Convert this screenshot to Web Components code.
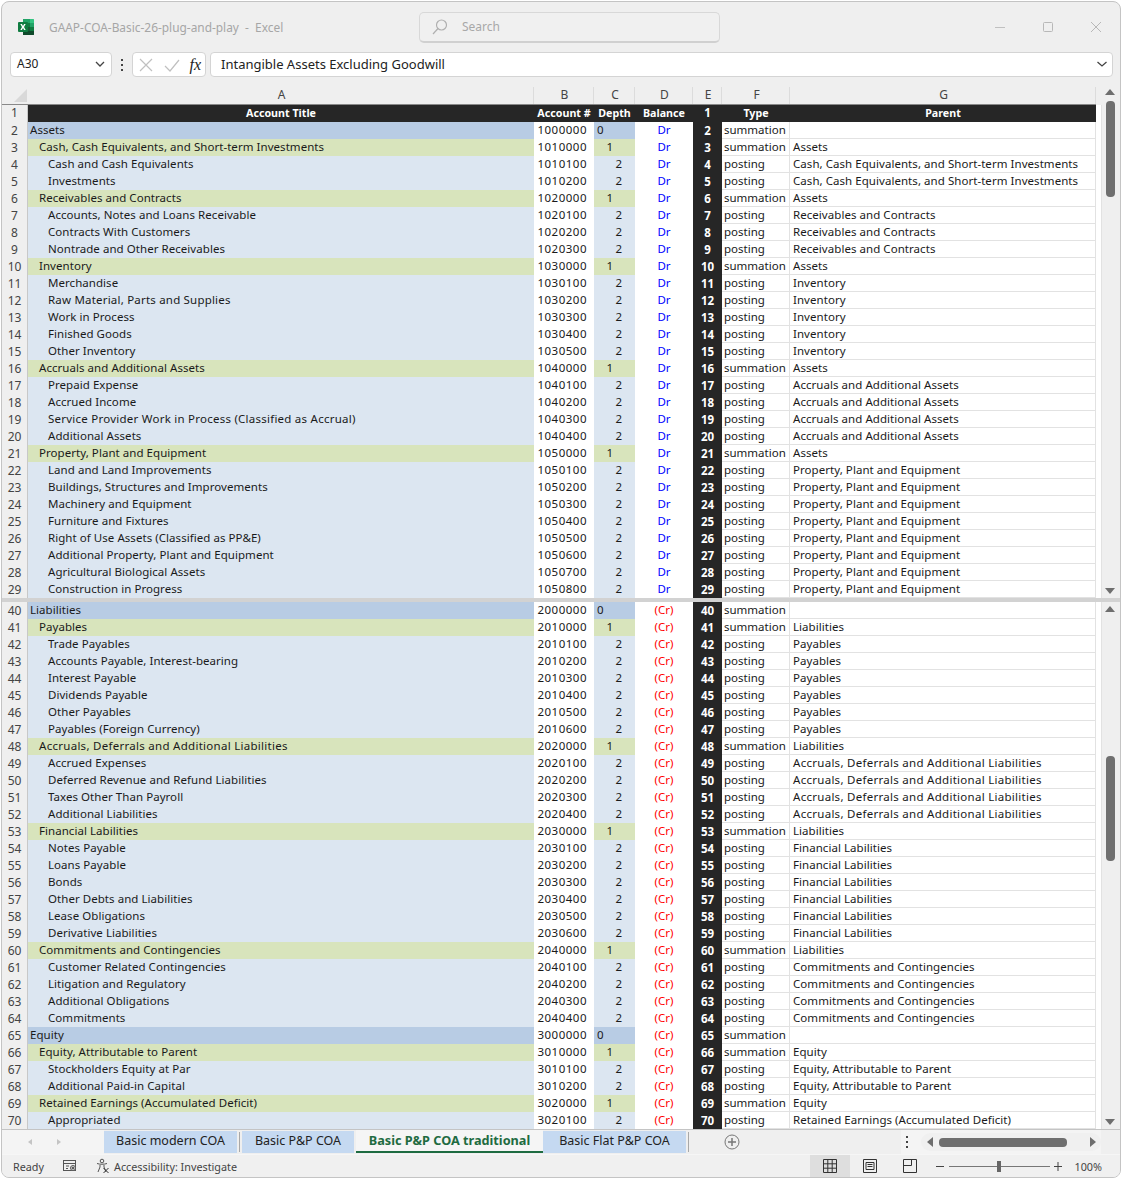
<!DOCTYPE html>
<html>
<head>
<meta charset="utf-8">
<title>Excel</title>
<style>
  html, body { margin: 0; padding: 0; background: #fff; }
  body { font-family: "Noto Sans", "Liberation Sans", sans-serif; }
</style>
</head>
<body>
<xl-window>
  <xl-titlebar slot="title" doc="GAAP-COA-Basic-26-plug-and-play  -  Excel"></xl-titlebar>
  <xl-formulabar slot="formula" cell="A30" value="Intangible Assets Excluding Goodwill"></xl-formulabar>
  <xl-heading slot="heading"></xl-heading>
  <xl-pane slot="top" from="1" to="29" up-top="-16" thumb-top="-4" thumb-height="96"></xl-pane>
  <xl-pane slot="bottom" from="40" to="70" up-top="4" thumb-top="154" thumb-height="105"></xl-pane>
  <xl-tabs slot="tabs"></xl-tabs>
  <xl-status slot="status"></xl-status>
</xl-window>

<script>
// column widths shared by heading and panes
const COLS = '506px 60px 41px 58px 29px 68px 306px';

const SHEET = [
  null, null,
  [0,'Assets',1000000],[1,'Cash, Cash Equivalents, and Short-term Investments',1010000],[2,'Cash and Cash Equivalents',1010100],[2,'Investments',1010200],
  [1,'Receivables and Contracts',1020000],[2,'Accounts, Notes and Loans Receivable',1020100],[2,'Contracts With Customers',1020200],[2,'Nontrade and Other Receivables',1020300],
  [1,'Inventory',1030000],[2,'Merchandise',1030100],[2,'Raw Material, Parts and Supplies',1030200],[2,'Work in Process',1030300],[2,'Finished Goods',1030400],[2,'Other Inventory',1030500],
  [1,'Accruals and Additional Assets',1040000],[2,'Prepaid Expense',1040100],[2,'Accrued Income',1040200],[2,'Service Provider Work in Process (Classified as Accrual)',1040300],[2,'Additional Assets',1040400],
  [1,'Property, Plant and Equipment',1050000],[2,'Land and Land Improvements',1050100],[2,'Buildings, Structures and Improvements',1050200],[2,'Machinery and Equipment',1050300],[2,'Furniture and Fixtures',1050400],[2,'Right of Use Assets (Classified as PP&E)',1050500],[2,'Additional Property, Plant and Equipment',1050600],[2,'Agricultural Biological Assets',1050700],[2,'Construction in Progress',1050800]
];
SHEET[40] = [0,'Liabilities',2000000];
[
  [1,'Payables',2010000],[2,'Trade Payables',2010100],[2,'Accounts Payable, Interest-bearing',2010200],[2,'Interest Payable',2010300],[2,'Dividends Payable',2010400],[2,'Other Payables',2010500],[2,'Payables (Foreign Currency)',2010600],
  [1,'Accruals, Deferrals and Additional Liabilities',2020000],[2,'Accrued Expenses',2020100],[2,'Deferred Revenue and Refund Liabilities',2020200],[2,'Taxes Other Than Payroll',2020300],[2,'Additional Liabilities',2020400],
  [1,'Financial Labilities',2030000],[2,'Notes Payable',2030100],[2,'Loans Payable',2030200],[2,'Bonds',2030300],[2,'Other Debts and Liabilities',2030400],[2,'Lease Obligations',2030500],[2,'Derivative Liabilities',2030600],
  [1,'Commitments and Contingencies',2040000],[2,'Customer Related Contingencies',2040100],[2,'Litigation and Regulatory',2040200],[2,'Additional Obligations',2040300],[2,'Commitments',2040400],
  [0,'Equity',3000000],[1,'Equity, Attributable to Parent',3010000],[2,'Stockholders Equity at Par',3010100],[2,'Additional Paid-in Capital',3010200],
  [1,'Retained Earnings (Accumulated Deficit)',3020000],[2,'Appropriated',3020100]
].forEach((r, i) => { SHEET[41 + i] = r; });

// a few long strings run wider in the reference
const WIDE = {
  'Accruals, Deferrals and Additional Liabilities': .28,
  'Service Provider Work in Process (Classified as Accrual)': .24,
  'Raw Material, Parts and Supplies': .2
};
const spacing = t => WIDE[t] ? `letter-spacing:${WIDE[t]}px` : '';

// parent names, worked out from the depth column
function parentOf(n) {
  const d = SHEET[n][0];
  if (d === 0) return '';
  for (let i = n - 1; i > 1; i--) {
    if (SHEET[i] && SHEET[i][0] === d - 1) return SHEET[i][1];
  }
  return '';
}

function shadow(el, html) {
  el.attachShadow({mode: 'open'}).innerHTML = html;
}

class XlWindow extends HTMLElement {
  constructor() {
    super();
    shadow(this, `
      <style>
        :host { display: block; width: 1122px; height: 1179px; box-sizing: border-box; padding: 1px; background: #fff; }
        .frame { width: 1120px; height: 1177px; box-sizing: border-box; border: 1px solid #c4c4c4; border-radius: 8px; background: #efefef; overflow: hidden; display: flex; flex-direction: column; }
        .gap { height: 4px; background: #d2d2d2; flex: none; }
      </style>
      <div class="frame">
        <slot name="title"></slot>
        <slot name="formula"></slot>
        <slot name="heading"></slot>
        <slot name="top"></slot>
        <div class="gap"></div>
        <slot name="bottom"></slot>
        <slot name="tabs"></slot>
        <slot name="status"></slot>
      </div>`);
  }
}

class XlTitlebar extends HTMLElement {
  connectedCallback() {
    shadow(this, `
      <style>
        :host { display: flex; align-items: center; height: 50px; flex: none; box-sizing: border-box; padding-left: 15px; }
        .logo { width: 18px; height: 18px; flex: none; }
        .doc { margin-left: 14px; width: 370px; flex: none; font-size: 11.900px; color: #a6a6a6; white-space: pre; }
        .search { width: 301px; height: 31px; flex: none; box-sizing: border-box; border: 1px solid #d8d8d8; border-bottom: 2px solid #d0d0d0; border-radius: 5px; background: #f0f0f0; display: flex; align-items: center; padding-left: 11px; font-size: 12px; color: #a8a8a8; }
        .search svg { margin-right: 13px; }
        .ctl { margin-left: auto; display: flex; padding-right: 17px; align-items: center; }
        .ctl svg + svg { margin-left: 34px; }
        .ctl svg + svg + svg { margin-left: 34px; }
        svg { display: block; }
      </style>
      <svg class="logo" viewBox="0 0 18 18">
        <path d="M6 1h7v4H6z" fill="#21a366"/><path d="M13 1h3.400c.4 0 .6.300.6.600V5h-4z" fill="#33c481"/>
        <path d="M6 5h7v4H6z" fill="#107c41"/><path d="M13 5h4v4h-4z" fill="#21a366"/>
        <path d="M6 9h7v4H6z" fill="#185c37"/><path d="M13 9h4v4h-4z" fill="#107c41"/>
        <path d="M6 13h11v3.400c0 .4-.3.600-.6.600H6.600c-.4 0-.6-.3-.6-.6z" fill="#0f4a2b"/>
        <rect x="1" y="4" width="10" height="10" rx="1" fill="#107c41"/>
        <path d="M3.300 6h1.600l1.100 2 1.100-2h1.600L7 9l1.700 3H7.100L6 10 4.900 12H3.300L5 9z" fill="#fff"/>
      </svg>
      <span class="doc">${this.getAttribute('doc')}</span>
      <div class="search">
        <svg width="18" height="18" viewBox="0 0 18 18" fill="none" stroke="#b0b0b0" stroke-width="1.200"><circle cx="10.500" cy="7" r="5"/><path d="M7 10.500 2 16"/></svg>
        <span>Search</span>
      </div>
      <div class="ctl">
        <svg width="14" height="14" viewBox="0 0 14 14" stroke="#c0c0c0" fill="none"><path d="M2 7.500h10"/></svg>
        <svg width="14" height="14" viewBox="0 0 14 14" stroke="#b8b8b8" fill="none"><rect x="2.500" y="2.500" width="9" height="9" rx="1"/></svg>
        <svg width="14" height="14" viewBox="0 0 14 14" stroke="#b8b8b8" fill="none"><path d="M2 2l10 10M12 2 2 12"/></svg>
      </div>`);
  }
}

class XlFormulabar extends HTMLElement {
  connectedCallback() {
    shadow(this, `
      <style>
        :host { display: flex; height: 25px; flex: none; box-sizing: border-box; padding-left: 8px; padding-right: 7px; color: #222; font-size: 13px; margin-bottom: 10px; }
        .box { background: #fff; border: 1px solid #d4d4d4; border-radius: 4px; box-sizing: border-box; display: flex; align-items: center; }
        .name { width: 102px; padding-left: 6px; justify-content: space-between; padding-right: 5px; font-size: 12px; padding-bottom: 2px; }
        .dots { width: 20px; display: flex; align-items: center; justify-content: center; }
        .fx { width: 74px; justify-content: space-between; padding: 0 4px 0 5px; color: #222; font: italic 16px "Liberation Serif", serif; }
        .val { flex: 1; margin-left: 4px; padding-left: 10px; padding-right: 4px; padding-bottom: 2px; justify-content: space-between; }
        svg { display: block; }
      </style>
      <div class="box name"><span>${this.getAttribute('cell')}</span>
        <svg width="12" height="12" viewBox="0 0 12 12" fill="none" stroke="#444" stroke-width="1.300"><path d="M2 4l4 4 4-4"/></svg></div>
      <div class="dots"><svg width="4" height="14" viewBox="0 0 4 14" fill="#444"><rect x="1" y="1" width="2" height="2"/><rect x="1" y="6" width="2" height="2"/><rect x="1" y="11" width="2" height="2"/></svg></div>
      <div class="box fx">
        <svg width="16" height="16" viewBox="0 0 16 16" fill="none" stroke="#c0c0c0" stroke-width="1.200"><path d="M2 2l12 12M14 2 2 14"/></svg>
        <svg width="18" height="16" viewBox="0 0 18 16" fill="none" stroke="#c0c0c0" stroke-width="1.200"><path d="M2 9l5 5L16 3"/></svg>
        <span>fx</span>
      </div>
      <div class="box val"><span>${this.getAttribute('value')}</span>
        <svg width="12" height="12" viewBox="0 0 12 12" fill="none" stroke="#444" stroke-width="1.300"><path d="M1.500 4l4.500 4 4.500-4"/></svg></div>`);
  }
}

class XlHeading extends HTMLElement {
  connectedCallback() {
    const letters = 'ABCDEFG'.split('').map(c => `<div class="l">${c}</div>`).join('');
    shadow(this, `
      <style>
        :host { display: flex; height: 18px; flex: none; font-size: 12px; color: #444; }
        .corner { width: 26px; flex: none; box-sizing: border-box; position: relative; border-bottom: 1px solid #888; }
        .corner i { position: absolute; right: 1px; bottom: 2px; width: 0; height: 0; border-left: 13px solid transparent; border-bottom: 13px solid #d9d9d9; }
        .cols { display: grid; grid-template-columns: ${COLS}; flex: none; border-bottom: 1px solid #888; box-sizing: border-box; }
        .l { text-align: center; line-height: 16px; padding-left: 2px; border-right: 1px solid #dcdcdc; }
      </style>
      <div class="corner"><i></i></div><div class="cols">${letters}</div>`);
  }
}

class XlPane extends HTMLElement {
  connectedCallback() {
    const from = +this.getAttribute('from'), to = +this.getAttribute('to');
    let heads = '', cells = '';
    for (let n = from; n <= to; n++) {
      heads += `<div class="rh${n === 1 ? ' first' : ''}">${n}</div>`;
      if (n === 1) {
        cells += ['Account Title','Account #','Depth','Balance','1','Type','Parent']
          .map((t, i) => `<div class="c hd${i === 4 ? ' e' : ''}">${t}</div>`).join('');
        continue;
      }
      const [d, title, acct] = SHEET[n];
      const dr = acct < 2000000;
      const parent = parentOf(n);
      cells += `<div class="c a d${d}" style="padding-left:${2 + d * 9}px;${spacing(title)}">${title}</div>`
        + `<div class="c b">${acct}</div>`
        + `<div class="c dep d${d} p${d}">${d}</div>`
        + `<div class="c bal ${dr ? 'dr' : 'cr'}">${dr ? 'Dr' : '(Cr)'}</div>`
        + `<div class="c e">${n}</div>`
        + `<div class="c f">${d < 2 ? 'summation' : 'posting'}</div>`
        + `<div class="c g" style="${spacing(parent)}">${parent}</div>`;
    }
    const up = this.getAttribute('up-top'), top = this.getAttribute('thumb-top'), h = this.getAttribute('thumb-height');
    shadow(this, `
      <style>
        :host { display: flex; flex: none; font-size: 11.500px; color: #1a1a1a; background: #fff; }
        .rhs { width: 26px; flex: none; background: #efefef; }
        .rh { height: 17px; line-height: 17px; text-align: center; font-size: 12px; color: #444; box-sizing: border-box; border-right: 1px solid #c8c8c8; }
        .first { line-height: 16px; }
        .grid { display: grid; grid-template-columns: ${COLS}; grid-auto-rows: 17px; flex: none; }
        .c { white-space: pre; overflow: hidden; line-height: 16px; box-sizing: border-box; padding: 0 2px; border-bottom: 1px solid #e2e2e2; border-right: 1px solid #e2e2e2; }
        .a, .g { letter-spacing: .05px; }
        .g { padding-left: 3px; }
        .hd { background: #262626; color: #fff; font-weight: 700; font-size: 10.700px; text-align: center; border: 0; line-height: 16px; padding: 0; }
        .d0 { background: #b8cce4; border-color: #b8cce4; }
        .d1 { background: #d8e4bc; border-color: #d8e4bc; }
        .d2 { background: #dce6f1; border-color: #dce6f1; }
        .b { text-align: right; padding-right: 6px; letter-spacing: .5px; border-color: #fff; }
        .dep { text-align: right; }
        .p0 { text-align: left; padding-left: 3px; }
        .p1 { padding-right: 21px; }
        .p2 { padding-right: 12px; }
        .bal { text-align: center; padding-left: 3px; border-color: #fff; }
        .dr { color: #0000ff; }
        .cr { color: #ff0000; }
        .e { background: #262626; color: #fff; font-weight: 700; text-align: center; border: 0; line-height: 17px; padding: 0; }
        .hd.e { font-size: 11.500px; line-height: 16px; }
        .bar { flex: 1; min-width: 0; position: relative; background: #fff; display: flex; }
        .spare { width: 5px; flex: none; background: #fff; border-right: 1px solid #e2e2e2; }
        .sb { flex: 1; background: #efefef; position: relative; }
        .up, .dn { position: absolute; left: 3px; width: 0; height: 0; border-left: 5px solid transparent; border-right: 5px solid transparent; }
        .up { border-bottom: 6px solid #6e6e6e; }
        .dn { bottom: 4px; border-top: 6px solid #6e6e6e; }
        .th { position: absolute; left: 4px; width: 9px; border-radius: 4px; background: #6f6f6f; }
      </style>
      <div class="rhs">${heads}</div>
      <div class="grid">${cells}</div>
      <div class="bar"><div class="spare"></div>
        <div class="sb"><i class="up" style="top:${up}px"></i><i class="th" style="top:${top}px;height:${h}px"></i><i class="dn"></i></div>
      </div>`);
  }
}

class XlTabs extends HTMLElement {
  connectedCallback() {
    shadow(this, `
      <style>
        :host { display: flex; flex: none; height: 25px; box-sizing: border-box; border-top: 1px solid #c4c4c4; background: #efefef; font-size: 12.500px; color: #222; align-items: flex-start; }
        .nav { width: 102px; flex: none; height: 24px; display: flex; align-items: center; gap: 25px; padding-left: 26px; box-sizing: border-box; background: #f4f4f4; }
        .nav i { width: 0; height: 0; border-top: 3px solid transparent; border-bottom: 3px solid transparent; }
        .nav .p { border-right: 4px solid #c4c4c4; }
        .nav .n { border-left: 4px solid #c4c4c4; }
        .tab { height: 22px; margin-top: 1px; padding-bottom: 3px; background: #c5d9f1; display: flex; align-items: center; justify-content: center; box-sizing: border-box; flex: none; }
        .sep { width: 1px; height: 20px; margin: 2px 2px 0; background: #a8a8a8; flex: none; }
        .on { background: #f5f5f5; color: #1e6b41; font-weight: 700; font-size: 12.700px; border-bottom: 2px solid #1e6b41; margin-top: 0; height: 23px; padding-bottom: 2px; }
        .add { width: 30px; height: 24px; flex: none; margin-left: 26px; display: flex; align-items: center; justify-content: center; }
        .rest { margin-left: auto; width: 200px; height: 24px; display: flex; align-items: center; background: #f4f4f4; flex: none; margin-right: 19px; }
        .dots { margin-left: 4px; margin-right: 12px; flex: none; }
        .track { width: 180px; box-sizing: border-box; height: 18px; background: #f0f0f0; border-radius: 9px; display: flex; align-items: center; padding: 0 5px 0 6px; gap: 6px; }
        .l { width: 0; height: 0; border-top: 5px solid transparent; border-bottom: 5px solid transparent; border-right: 6px solid #6e6e6e; }
        .r { width: 0; height: 0; border-top: 5px solid transparent; border-bottom: 5px solid transparent; border-left: 6px solid #6e6e6e; margin-left: 17px; }
        .t { width: 128px; height: 9px; border-radius: 4px; background: #6f6f6f; }
        svg { display: block; }
      </style>
      <div class="nav"><i class="p"></i><i class="n"></i></div>
      <div class="tab" style="width:133px">Basic modern COA</div><div class="sep"></div>
      <div class="tab" style="width:112px">Basic P&amp;P COA</div><div style="width:2px;flex:none"></div>
      <div class="tab on" style="width:187px">Basic P&amp;P COA traditional</div>
      <div class="tab" style="width:143px">Basic Flat P&amp;P COA</div><div class="sep"></div>
      <div class="add"><svg width="16" height="16" viewBox="0 0 16 16" fill="none" stroke="#777"><circle cx="8" cy="8" r="7"/><path d="M8 4v8M4 8h8" stroke-width="1.500"/></svg></div>
      <div class="rest">
        <svg class="dots" width="4" height="14" viewBox="0 0 4 14" fill="#444"><rect x="1" y="1" width="2" height="2"/><rect x="1" y="6" width="2" height="2"/><rect x="1" y="11" width="2" height="2"/></svg>
        <div class="track"><i class="l"></i><i class="t"></i><i class="r"></i></div>
      </div>`);
  }
}

class XlStatus extends HTMLElement {
  connectedCallback() {
    shadow(this, `
      <style>
        :host { display: flex; flex: 1; align-items: stretch; background: #f0f0f0; border-top: 1px solid #f6f6f6; font-size: 10.800px; color: #444; padding-left: 11px; padding-right: 18px; box-sizing: border-box; }
        span { display: flex; align-items: center; }
        .ready { width: 49px; }
        .acc { margin-left: 17px; gap: 3px; display: flex; align-items: center; }
        .views { margin-left: auto; display: flex; }
        .v { width: 40px; display: flex; align-items: center; justify-content: center; }
        .cur { background: #dedede; }
        .zoom { display: flex; align-items: center; margin-left: 5px; gap: 4px; }
        .track { width: 101px; height: 1px; background: #777; position: relative; margin: 0 -1px 0 0; }
        .track i { position: absolute; left: 48px; top: -5px; width: 4px; height: 11px; background: #666; }
        .pct { margin-left: 12px; }
        svg { display: block; }
      </style>
      <span class="ready">Ready</span>
      <svg style="align-self:center" width="16" height="14" viewBox="0 0 16 14" fill="none" stroke="#555"><rect x="1.500" y="1.500" width="12" height="10"/><path d="M1.500 4.500h12M4 7h3M4 9.500h2"/><circle cx="11" cy="9" r="2.500" fill="#f0f0f0"/><circle cx="11" cy="9" r="1" fill="#555"/></svg>
      <div class="acc">
        <svg width="16" height="16" viewBox="0 0 16 16" fill="none" stroke="#555"><circle cx="7" cy="3" r="1.800"/><path d="M2 5.500c3 1 7 1 10 0M5 7v2l-2 5M9 7v2l2 5"/><path d="M8.500 10l5 5M13.500 10l-5 5" stroke="#333"/></svg>
        <span>Accessibility: Investigate</span>
      </div>
      <div class="views">
        <div class="v cur"><svg width="14" height="14" viewBox="0 0 14 14" fill="none" stroke="#333"><path d="M.5.500h13v13H.500zM.5 4.800h13M.5 9.200h13M4.800.500v13M9.200.500v13"/></svg></div>
        <div class="v"><svg width="14" height="14" viewBox="0 0 14 14" fill="none" stroke="#333"><path d="M.5.500h13v13H.500zM3 3.500h8v7H3zM4.500 5.500h5M4.500 7.500h5"/></svg></div>
        <div class="v"><svg width="14" height="14" viewBox="0 0 14 14" fill="none" stroke="#333"><path d="M.5.500h13v13H.500zM8.500.500v6H.5"/></svg></div>
      </div>
      <div class="zoom">
        <svg width="10" height="10" viewBox="0 0 10 10" stroke="#444"><path d="M1 5.500h8"/></svg>
        <div class="track"><i></i></div>
        <svg width="10" height="10" viewBox="0 0 10 10" stroke="#444"><path d="M1 5.500h8M5 1v9"/></svg>
      </div>
      <span class="pct">100%</span>`);
  }
}

customElements.define('xl-window', XlWindow);
customElements.define('xl-titlebar', XlTitlebar);
customElements.define('xl-formulabar', XlFormulabar);
customElements.define('xl-heading', XlHeading);
customElements.define('xl-pane', XlPane);
customElements.define('xl-tabs', XlTabs);
customElements.define('xl-status', XlStatus);
</script>
</body>
</html>
